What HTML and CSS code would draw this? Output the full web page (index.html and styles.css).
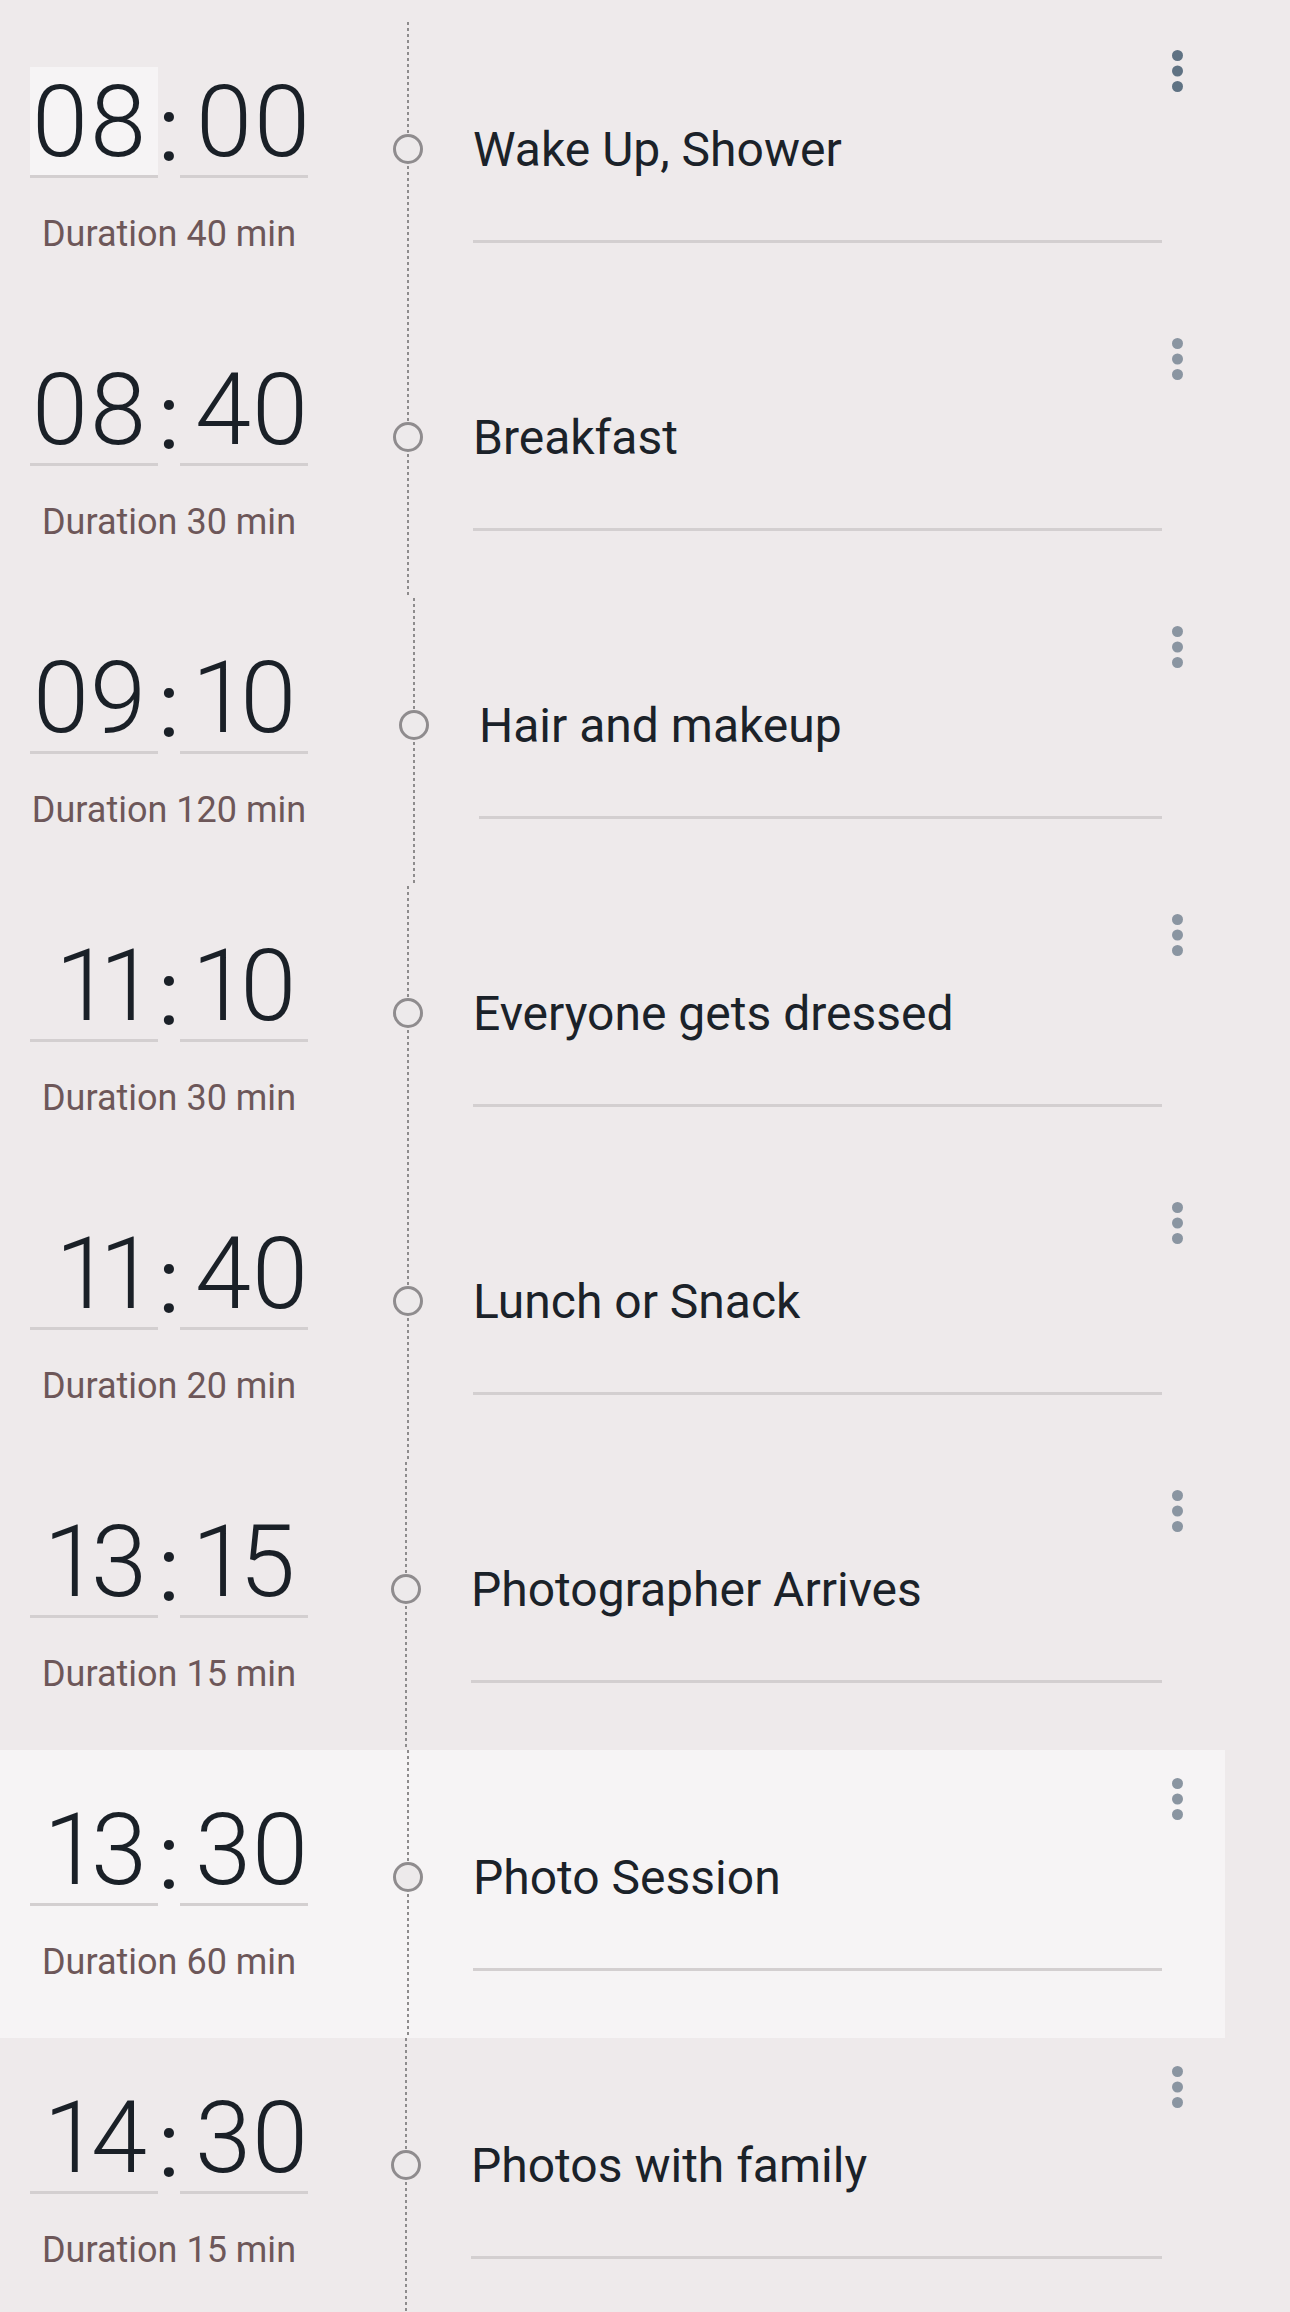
FILE: index.html
```html
<!DOCTYPE html>
<html lang="en">
<head>
<meta charset="utf-8">
<title>Schedule</title>
<link rel="stylesheet" href="styles.css">
</head>
<body>
<main class="schedule">
  <div class="row">
    <div class="when">
      <div class="clock"><span class="field field--h field--focus">08</span><span class="sep">:</span><span class="field field--m">00</span></div>
      <div class="duration">Duration 40 min</div>
    </div>
    <div class="track"><span class="node"></span></div>
    <div class="what"><div class="title">Wake Up, Shower</div></div>
    <button class="more more--active" aria-label="More"><svg viewBox="0 0 11 43" width="11" height="43"><circle cx="5.5" cy="5.5" r="5.5"/><circle cx="5.5" cy="21" r="5.5"/><circle cx="5.5" cy="36.5" r="5.5"/></svg></button>
  </div>
  <div class="row">
    <div class="when">
      <div class="clock"><span class="field field--h">08</span><span class="sep">:</span><span class="field field--m">40</span></div>
      <div class="duration">Duration 30 min</div>
    </div>
    <div class="track"><span class="node"></span></div>
    <div class="what"><div class="title">Breakfast</div></div>
    <button class="more" aria-label="More"><svg viewBox="0 0 11 43" width="11" height="43"><circle cx="5.5" cy="5.5" r="5.5"/><circle cx="5.5" cy="21" r="5.5"/><circle cx="5.5" cy="36.5" r="5.5"/></svg></button>
  </div>
  <div class="row row--wide">
    <div class="when">
      <div class="clock"><span class="field field--h">09</span><span class="sep">:</span><span class="field field--m">10</span></div>
      <div class="duration">Duration 120 min</div>
    </div>
    <div class="track"><span class="node"></span></div>
    <div class="what"><div class="title">Hair and makeup</div></div>
    <button class="more" aria-label="More"><svg viewBox="0 0 11 43" width="11" height="43"><circle cx="5.5" cy="5.5" r="5.5"/><circle cx="5.5" cy="21" r="5.5"/><circle cx="5.5" cy="36.5" r="5.5"/></svg></button>
  </div>
  <div class="row">
    <div class="when">
      <div class="clock"><span class="field field--h">11</span><span class="sep">:</span><span class="field field--m">10</span></div>
      <div class="duration">Duration 30 min</div>
    </div>
    <div class="track"><span class="node"></span></div>
    <div class="what"><div class="title">Everyone gets dressed</div></div>
    <button class="more" aria-label="More"><svg viewBox="0 0 11 43" width="11" height="43"><circle cx="5.5" cy="5.5" r="5.5"/><circle cx="5.5" cy="21" r="5.5"/><circle cx="5.5" cy="36.5" r="5.5"/></svg></button>
  </div>
  <div class="row">
    <div class="when">
      <div class="clock"><span class="field field--h">11</span><span class="sep">:</span><span class="field field--m">40</span></div>
      <div class="duration">Duration 20 min</div>
    </div>
    <div class="track"><span class="node"></span></div>
    <div class="what"><div class="title">Lunch or Snack</div></div>
    <button class="more" aria-label="More"><svg viewBox="0 0 11 43" width="11" height="43"><circle cx="5.5" cy="5.5" r="5.5"/><circle cx="5.5" cy="21" r="5.5"/><circle cx="5.5" cy="36.5" r="5.5"/></svg></button>
  </div>
  <div class="row row--narrow">
    <div class="when">
      <div class="clock"><span class="field field--h">13</span><span class="sep">:</span><span class="field field--m">15</span></div>
      <div class="duration">Duration 15 min</div>
    </div>
    <div class="track"><span class="node"></span></div>
    <div class="what"><div class="title">Photographer Arrives</div></div>
    <button class="more" aria-label="More"><svg viewBox="0 0 11 43" width="11" height="43"><circle cx="5.5" cy="5.5" r="5.5"/><circle cx="5.5" cy="21" r="5.5"/><circle cx="5.5" cy="36.5" r="5.5"/></svg></button>
  </div>
  <div class="row row--selected">
    <div class="when">
      <div class="clock"><span class="field field--h">13</span><span class="sep">:</span><span class="field field--m">30</span></div>
      <div class="duration">Duration 60 min</div>
    </div>
    <div class="track"><span class="node"></span></div>
    <div class="what"><div class="title">Photo Session</div></div>
    <button class="more" aria-label="More"><svg viewBox="0 0 11 43" width="11" height="43"><circle cx="5.5" cy="5.5" r="5.5"/><circle cx="5.5" cy="21" r="5.5"/><circle cx="5.5" cy="36.5" r="5.5"/></svg></button>
  </div>
  <div class="row row--narrow">
    <div class="when">
      <div class="clock"><span class="field field--h">14</span><span class="sep">:</span><span class="field field--m">30</span></div>
      <div class="duration">Duration 15 min</div>
    </div>
    <div class="track"><span class="node"></span></div>
    <div class="what"><div class="title">Photos with family</div></div>
    <button class="more" aria-label="More"><svg viewBox="0 0 11 43" width="11" height="43"><circle cx="5.5" cy="5.5" r="5.5"/><circle cx="5.5" cy="21" r="5.5"/><circle cx="5.5" cy="36.5" r="5.5"/></svg></button>
  </div>
</main>
</body>
</html>
```

FILE: styles.css
```css
* { box-sizing: border-box; }

html, body {
  margin: 0;
  padding: 0;
}

body {
  background: #eeeaeb;
  font-family: Roboto, "Liberation Sans", sans-serif;
  height: 2312px;
  overflow: hidden;
}

.schedule {
  width: 1225px;
  padding-top: 22px;
  display: flex;
  flex-direction: column;
}

.row {
  display: flex;
  flex: none;
  height: 288px;
  padding-right: 32px;
}

.row--selected {
  background: #f6f4f5;
}

.when {
  flex: none;
  width: 278px;
  margin-left: 30px;
  padding-top: 45px;
  display: flex;
  flex-direction: column;
  align-items: center;
}

.clock {
  display: flex;
  width: 278px;
}

.field {
  width: 128px;
  height: 111px;
  padding-top: 2px;
  border-bottom: 3px solid #d3cfd0;
  font-size: 101px;
  font-weight: 300;
  line-height: 106px;
  color: #1a2027;
  white-space: nowrap;
  font-variant-numeric: proportional-nums;
  font-feature-settings: "pnum" 1;
}

.field--h {
  text-align: right;
  padding-right: 11px;
}

.field--m {
  text-align: left;
  padding-left: 15px;
}

.field--focus {
  background: #f6f4f5;
}

.sep {
  width: 22px;
  padding-top: 10px;
  text-align: center;
  font-size: 90px;
  font-weight: 400;
  line-height: 106px;
  color: #1a2027;
}

.duration {
  margin-top: 31px;
  font-size: 36px;
  line-height: 40px;
  color: #6d5759;
  white-space: nowrap;
}

.track {
  flex: none;
  width: 30px;
  margin-left: 85px;
  display: flex;
  flex-direction: column;
  align-items: center;
  background: repeating-linear-gradient(to bottom, #8e8c8d 0 3px, transparent 3px 6px) no-repeat center top / 2px 100%;
}

.row--wide .track { margin-left: 91px; }
.row--narrow .track { margin-left: 83px; }

.node {
  width: 30px;
  height: 30px;
  margin-top: 112px;
  border: 3px solid #8f8c8e;
  border-radius: 50%;
  background: #edeaeb;
}

.what {
  flex: 1;
  min-width: 0;
  margin-left: 50px;
  padding-top: 100px;
}

.title {
  font-size: 48px;
  line-height: 56px;
  color: #1b2229;
  padding-bottom: 62px;
  border-bottom: 3px solid #d3cfd0;
  white-space: nowrap;
}

.more {
  flex: none;
  width: 31px;
  padding: 28px 0 0;
  margin: 0;
  border: 0;
  background: none;
  display: flex;
  justify-content: center;
  align-items: flex-start;
  fill: #8a95a1;
}

.more--active {
  fill: #5f7283;
}

.more svg {
  display: block;
}
```
